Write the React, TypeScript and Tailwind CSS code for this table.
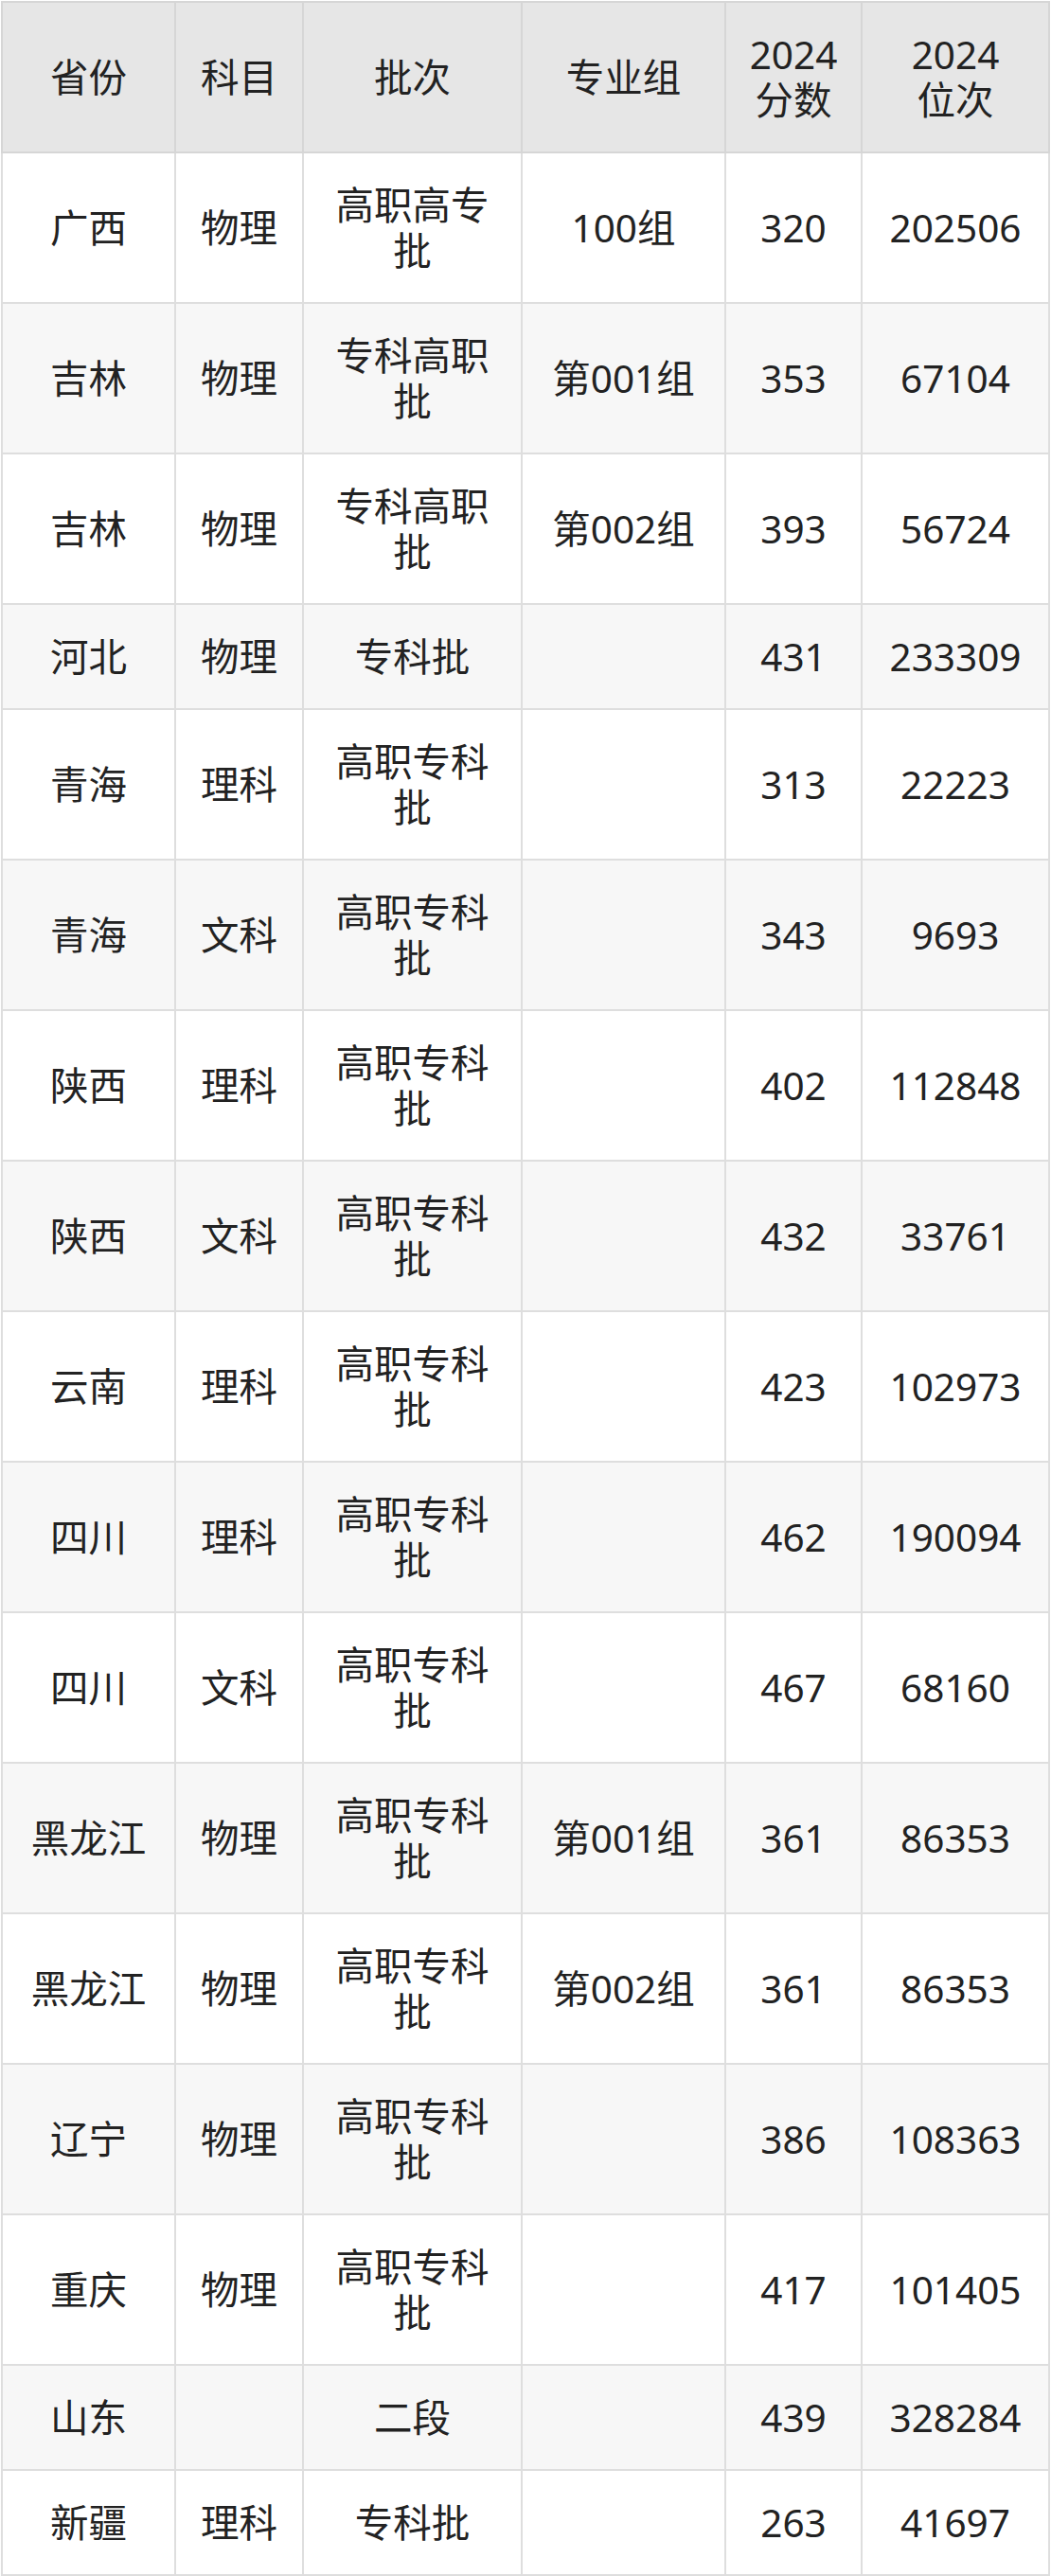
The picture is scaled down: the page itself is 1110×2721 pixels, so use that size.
import React from 'react';

interface Row {
  province: string;
  subject: string;
  batch: string[];
  group: string;
  score: string;
  rank: string;
}

const rows: Row[] = [
  { province: '广西', subject: '物理', batch: ['高职高专', '批'], group: '100组', score: '320', rank: '202506' },
  { province: '吉林', subject: '物理', batch: ['专科高职', '批'], group: '第001组', score: '353', rank: '67104' },
  { province: '吉林', subject: '物理', batch: ['专科高职', '批'], group: '第002组', score: '393', rank: '56724' },
  { province: '河北', subject: '物理', batch: ['专科批'], group: '', score: '431', rank: '233309' },
  { province: '青海', subject: '理科', batch: ['高职专科', '批'], group: '', score: '313', rank: '22223' },
  { province: '青海', subject: '文科', batch: ['高职专科', '批'], group: '', score: '343', rank: '9693' },
  { province: '陕西', subject: '理科', batch: ['高职专科', '批'], group: '', score: '402', rank: '112848' },
  { province: '陕西', subject: '文科', batch: ['高职专科', '批'], group: '', score: '432', rank: '33761' },
  { province: '云南', subject: '理科', batch: ['高职专科', '批'], group: '', score: '423', rank: '102973' },
  { province: '四川', subject: '理科', batch: ['高职专科', '批'], group: '', score: '462', rank: '190094' },
  { province: '四川', subject: '文科', batch: ['高职专科', '批'], group: '', score: '467', rank: '68160' },
  { province: '黑龙江', subject: '物理', batch: ['高职专科', '批'], group: '第001组', score: '361', rank: '86353' },
  { province: '黑龙江', subject: '物理', batch: ['高职专科', '批'], group: '第002组', score: '361', rank: '86353' },
  { province: '辽宁', subject: '物理', batch: ['高职专科', '批'], group: '', score: '386', rank: '108363' },
  { province: '重庆', subject: '物理', batch: ['高职专科', '批'], group: '', score: '417', rank: '101405' },
  { province: '山东', subject: '', batch: ['二段'], group: '', score: '439', rank: '328284' },
  { province: '新疆', subject: '理科', batch: ['专科批'], group: '', score: '263', rank: '41697' },
];

const headers: string[][] = [
  ['省份'],
  ['科目'],
  ['批次'],
  ['专业组'],
  ['2024', '分数'],
  ['2024', '位次'],
];

const widths = ['w-[183px]', 'w-[135px]', 'w-[231px]', 'w-[215px]', 'w-[144px]', 'w-[198px]'];

function Lines({ lines }: { lines: string[] }) {
  return (
    <>
      {lines.map((l, i) => (
        <React.Fragment key={i}>
          {i > 0 && <br />}
          {l}
        </React.Fragment>
      ))}
    </>
  );
}

export default function App() {
  return (
    <div className="w-[1110px] bg-white pl-[1px] pt-[1px] font-['Noto_Sans','Noto_Sans_CJK_SC',sans-serif] text-[40.5px] text-[#222222]">
      <table className="w-[1106px] table-fixed border-collapse border-2 border-[#dadada]">
        <colgroup>
          {widths.map((w, i) => (
            <col key={i} className={w} />
          ))}
        </colgroup>
        <thead>
          <tr className="bg-[#e6e6e6]">
            {headers.map((h, i) => (
              <th
                key={i}
                className="border-2 border-[#d6d6d6] px-2 py-[30.5px] text-center align-middle font-normal leading-[48px]"
              >
                <Lines lines={h} />
              </th>
            ))}
          </tr>
        </thead>
        <tbody>
          {rows.map((r, i) => {
            const cells = [[r.province], [r.subject], r.batch, [r.group], [r.score], [r.rank]];
            return (
              <tr key={i} className={i % 2 === 0 ? 'bg-white' : 'bg-[#f7f7f7]'}>
                {cells.map((c, j) => (
                  <td
                    key={j}
                    className="border-2 border-[#dedede] px-2 py-[30.5px] text-center align-middle leading-[48px]"
                  >
                    <Lines lines={c} />
                  </td>
                ))}
              </tr>
            );
          })}
        </tbody>
      </table>
    </div>
  );
}
